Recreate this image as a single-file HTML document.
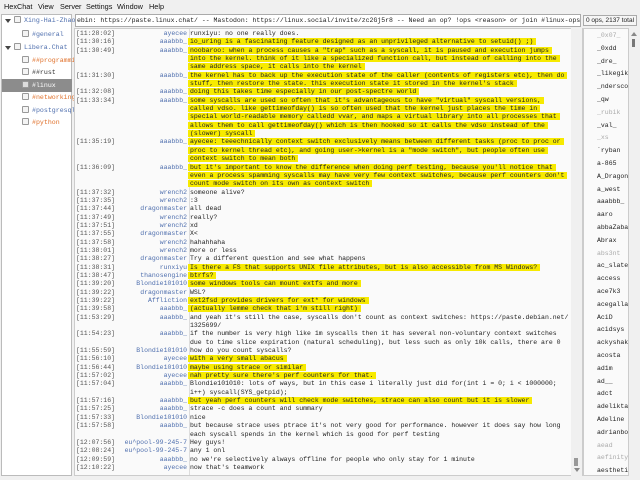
<!DOCTYPE html>
<html><head><meta charset="utf-8"><style>
*{margin:0;padding:0;box-sizing:border-box}
body{width:640px;height:480px;overflow:hidden;background:#f0f0f0;font-family:"Liberation Sans",sans-serif;position:relative}
.menu{position:absolute;top:0;left:0;width:640px;height:13px;font-size:7.3px;line-height:13px;color:#111}
.menu span{position:absolute;top:0;white-space:nowrap}
.tree{position:absolute;left:1px;top:14px;width:71px;height:462px;background:#fff;border:1px solid #bbb;font-family:"Liberation Mono",monospace;font-size:6.6px}
.ti{position:absolute;height:12px;line-height:12px;white-space:nowrap;overflow:hidden}
.ic{display:inline-block;width:7px;height:7px;border:1px solid #999;border-radius:1px;background:#f4f4f4;vertical-align:-1px;margin-right:3px}
.tri{position:absolute;width:0;height:0;border-left:3px solid transparent;border-right:3px solid transparent;border-top:4px solid #444}
.topic{position:absolute;left:75px;top:14px;width:506px;height:13px;background:#fff;border:1px solid #aaa;font-family:"Liberation Mono",monospace;font-size:6.5px;line-height:11px;padding-left:1px;white-space:nowrap;overflow:hidden;color:#222}
.cnt{position:absolute;left:583px;top:15px;width:54px;height:11px;border:1px solid #aaa;background:#f6f6f6;font-size:6.5px;line-height:9px;text-align:center;color:#222;white-space:nowrap}
.chat{position:absolute;left:74px;top:28px;width:509px;height:448px;background:#fafafa;border:1px solid #ccc;overflow:hidden}
.sep{position:absolute;left:114px;top:0;width:1px;height:448px;background:#ddd}
.lines{position:absolute;left:1px;top:1px;font-family:"Liberation Mono",monospace;font-size:6.5px;color:#222}
.l{height:8.35px;line-height:8.35px;white-space:nowrap;position:relative}
.t{position:absolute;left:0;color:#555}
.n{position:absolute;left:39px;width:72px;text-align:right;color:#4f6fae}
.m{position:absolute;left:114px}
.h{background:#f7ea00;padding:0 3px 0 2px;margin-left:-2px}
.sb{position:absolute;left:571px;top:28px;width:11px;height:448px;background:#f0f0f0}
.ul{position:absolute;left:583px;top:28px;width:46px;height:448px;background:#fafafa;border:1px solid #ccc;font-family:"Liberation Mono",monospace;font-size:6.5px;color:#222;overflow:hidden}
.u{position:absolute;left:13px;white-space:nowrap}
.g{color:#aaa}
.sb2{position:absolute;left:629px;top:28px;width:10px;height:448px;background:#f0f0f0}
</style></head><body>
<div class="menu">
<span style="left:4px">HexChat</span><span style="left:38px">View</span><span style="left:60px">Server</span><span style="left:86px">Settings</span><span style="left:117px">Window</span><span style="left:149px">Help</span>
</div>
<div class="tree">
<div class="tri" style="left:3px;top:4px"></div>
<div class="ti" style="left:12px;top:0px;color:#4f6fae"><span class="ic"></span>Xing-Hai-Zhao</div>
<div class="ti" style="left:20px;top:14px;color:#4f6fae"><span class="ic"></span>#general</div>
<div class="tri" style="left:3px;top:31px"></div>
<div class="ti" style="left:12px;top:27px;color:#4f6fae"><span class="ic"></span>Libera.Chat</div>
<div class="ti" style="left:20px;top:40px;color:#e0702a"><span class="ic"></span>##programming</div>
<div class="ti" style="left:20px;top:52px;color:#333"><span class="ic"></span>##rust</div>
<div style="position:absolute;left:0;top:64px;width:70px;height:13px;background:#8c8c8c"></div>
<div class="ti" style="left:20px;top:65px;color:#fff"><span class="ic" style="background:#ddd"></span>#linux</div>
<div class="ti" style="left:20px;top:77px;color:#e0702a"><span class="ic"></span>#networking</div>
<div class="ti" style="left:20px;top:90px;color:#4f6fae"><span class="ic"></span>#postgresql</div>
<div class="ti" style="left:20px;top:102px;color:#e0702a"><span class="ic"></span>#python</div>
</div>
<div class="topic">ebin: https://paste.linux.chat/ -- Mastodon: https://linux.social/invite/zc2Gj5r8 -- Need an op? !ops &lt;reason&gt; or join #linux-ops</div>
<div class="cnt">0 ops, 2137 total</div>
<div class="chat"><div class="sep"></div>
<div class="lines">
<div class="l"><span class="t">[11:28:02]</span><span class="n">ayecee</span><span class="m">runxiyu: no one really does.</span></div>
<div class="l"><span class="t">[11:30:16]</span><span class="n">aaabbb_</span><span class="m"><span class="h">io_uring is a fascinating feature designed as an unprivileged alternative to setuid() ;)</span></span></div>
<div class="l"><span class="t">[11:30:49]</span><span class="n">aaabbb_</span><span class="m"><span class="h">noobaroo: when a process causes a "trap" such as a syscall, it is paused and execution jumps</span></span></div>
<div class="l"><span class="m"><span class="h">into the kernel. think of it like a specialized function call, but instead of calling into the</span></span></div>
<div class="l"><span class="m"><span class="h">same address space, it calls into the kernel</span></span></div>
<div class="l"><span class="t">[11:31:30]</span><span class="n">aaabbb_</span><span class="m"><span class="h">the kernel has to back up the execution state of the caller (contents of registers etc), then do</span></span></div>
<div class="l"><span class="m"><span class="h">stuff, then restore the state. this execution state it stored in the kernel's stack</span></span></div>
<div class="l"><span class="t">[11:32:08]</span><span class="n">aaabbb_</span><span class="m"><span class="h">doing this takes time especially in our post-spectre world</span></span></div>
<div class="l"><span class="t">[11:33:34]</span><span class="n">aaabbb_</span><span class="m"><span class="h">some syscalls are used so often that it's advantageous to have "virtual" syscall versions,</span></span></div>
<div class="l"><span class="m"><span class="h">called vdso. like gettimeofday() is so often used that the kernel just places the time in</span></span></div>
<div class="l"><span class="m"><span class="h">special world-readable memory calledd vvar, and maps a virtual library into all processes that</span></span></div>
<div class="l"><span class="m"><span class="h">allows them to call gettimeofday() which is then hooked so it calls the vdso instead of the</span></span></div>
<div class="l"><span class="m"><span class="h">(slower) syscall</span></span></div>
<div class="l"><span class="t">[11:35:19]</span><span class="n">aaabbb_</span><span class="m"><span class="h">ayecee: teeechnically context switch exclusively means between different tasks (proc to proc or</span></span></div>
<div class="l"><span class="m"><span class="h">proc to kernel thread etc), and going user-&gt;kernel is a "mode switch", but people often use</span></span></div>
<div class="l"><span class="m"><span class="h">context switch to mean both</span></span></div>
<div class="l"><span class="t">[11:36:09]</span><span class="n">aaabbb_</span><span class="m"><span class="h">but it's important to know the difference when doing perf testing, because you'll notice that</span></span></div>
<div class="l"><span class="m"><span class="h">even a process spamming syscalls may have very few context switches, because perf counters don't</span></span></div>
<div class="l"><span class="m"><span class="h">count mode switch on its own as context switch</span></span></div>
<div class="l"><span class="t">[11:37:32]</span><span class="n">wrench2</span><span class="m">someone alive?</span></div>
<div class="l"><span class="t">[11:37:35]</span><span class="n">wrench2</span><span class="m">:3</span></div>
<div class="l"><span class="t">[11:37:44]</span><span class="n">dragonmaster</span><span class="m">all dead</span></div>
<div class="l"><span class="t">[11:37:49]</span><span class="n">wrench2</span><span class="m">really?</span></div>
<div class="l"><span class="t">[11:37:51]</span><span class="n">wrench2</span><span class="m">xd</span></div>
<div class="l"><span class="t">[11:37:55]</span><span class="n">dragonmaster</span><span class="m">X&lt;</span></div>
<div class="l"><span class="t">[11:37:58]</span><span class="n">wrench2</span><span class="m">hahahhaha</span></div>
<div class="l"><span class="t">[11:38:01]</span><span class="n">wrench2</span><span class="m">more or less</span></div>
<div class="l"><span class="t">[11:38:27]</span><span class="n">dragonmaster</span><span class="m">Try a different question and see what happens</span></div>
<div class="l"><span class="t">[11:38:31]</span><span class="n">runxiyu</span><span class="m"><span class="h">Is there a FS that supports UNIX file attributes, but is also accessible from MS Windows?</span></span></div>
<div class="l"><span class="t">[11:38:47]</span><span class="n">thanosengine</span><span class="m"><span class="h">btrfs?</span></span></div>
<div class="l"><span class="t">[11:39:20]</span><span class="n">Blondie101010</span><span class="m"><span class="h">some windows tools can mount extfs and more</span></span></div>
<div class="l"><span class="t">[11:39:22]</span><span class="n">dragonmaster</span><span class="m">WSL?</span></div>
<div class="l"><span class="t">[11:39:22]</span><span class="n">Affliction</span><span class="m"><span class="h">ext2fsd provides drivers for ext* for windows</span></span></div>
<div class="l"><span class="t">[11:39:58]</span><span class="n">aaabbb_</span><span class="m"><span class="h">(actually lemme check that i'm still right)</span></span></div>
<div class="l"><span class="t">[11:53:29]</span><span class="n">aaabbb_</span><span class="m">and yeah it's still the case, syscalls don't count as context switches: https://paste.debian.net/</span></div>
<div class="l"><span class="m">1325699/</span></div>
<div class="l"><span class="t">[11:54:23]</span><span class="n">aaabbb_</span><span class="m">if the number is very high like 1m syscalls then it has several non-voluntary context switches</span></div>
<div class="l"><span class="m">due to time slice expiration (natural scheduling), but less such as only 10k calls, there are 0</span></div>
<div class="l"><span class="t">[11:55:59]</span><span class="n">Blondie101010</span><span class="m">how do you count syscalls?</span></div>
<div class="l"><span class="t">[11:56:10]</span><span class="n">ayecee</span><span class="m"><span class="h">with a very small abacus</span></span></div>
<div class="l"><span class="t">[11:56:44]</span><span class="n">Blondie101010</span><span class="m"><span class="h">maybe using strace or similar</span></span></div>
<div class="l"><span class="t">[11:57:02]</span><span class="n">ayecee</span><span class="m"><span class="h">nah pretty sure there's perf counters for that.</span></span></div>
<div class="l"><span class="t">[11:57:04]</span><span class="n">aaabbb_</span><span class="m">Blondie101010: lots of ways, but in this case i literally just did for(int i = 0; i &lt; 1000000;</span></div>
<div class="l"><span class="m">i++) syscall(SYS_getpid);</span></div>
<div class="l"><span class="t">[11:57:16]</span><span class="n">aaabbb_</span><span class="m"><span class="h">but yeah perf counters will check mode switches, strace can also count but it is slower</span></span></div>
<div class="l"><span class="t">[11:57:25]</span><span class="n">aaabbb_</span><span class="m">strace -c does a count and summary</span></div>
<div class="l"><span class="t">[11:57:33]</span><span class="n">Blondie101010</span><span class="m">nice</span></div>
<div class="l"><span class="t">[11:57:58]</span><span class="n">aaabbb_</span><span class="m">but because strace uses ptrace it's not very good for performance. however it does say how long</span></div>
<div class="l"><span class="m">each syscall spends in the kernel which is good for perf testing</span></div>
<div class="l"><span class="t">[12:07:56]</span><span class="n">eu^pool-99-245-7</span><span class="m">Hey guys!</span></div>
<div class="l"><span class="t">[12:08:24]</span><span class="n">eu^pool-99-245-7</span><span class="m">any 1 onl</span></div>
<div class="l"><span class="t">[12:09:59]</span><span class="n">aaabbb_</span><span class="m">no we're selectively always offline for people who only stay for 1 minute</span></div>
<div class="l"><span class="t">[12:10:22]</span><span class="n">ayecee</span><span class="m">now that's teamwork</span></div>
</div></div>
<div class="sb"><div style="position:absolute;left:3px;top:430px;width:4px;height:8px;background:#999"></div><div style="position:absolute;left:3px;top:440px;border-left:3px solid transparent;border-right:3px solid transparent;border-top:4px solid #888;width:0;height:0"></div></div>
<div class="ul">
<div class="u g" style="top:3px">_0x07_</div><div class="u" style="top:16px">_0xdd</div><div class="u" style="top:29px">_dre_</div><div class="u" style="top:41px">_likegik</div><div class="u" style="top:54px">_ndersco</div><div class="u" style="top:67px">_qw</div><div class="u g" style="top:80px">_rubik</div><div class="u" style="top:93px">_val_</div><div class="u g" style="top:105px">_xs</div><div class="u" style="top:118px">`ryban</div><div class="u" style="top:131px">a-865</div><div class="u" style="top:144px">A_Dragon</div><div class="u" style="top:157px">a_west</div><div class="u" style="top:169px">aaabbb_</div><div class="u" style="top:182px">aaro</div><div class="u" style="top:195px">abbaZaba</div><div class="u" style="top:208px">Abrax</div><div class="u g" style="top:221px">abs3nt</div><div class="u" style="top:233px">ac_slate</div><div class="u" style="top:246px">access</div><div class="u" style="top:259px">ace7k3</div><div class="u" style="top:272px">acegalla</div><div class="u" style="top:285px">AciD</div><div class="u" style="top:297px">acidsys</div><div class="u" style="top:310px">ackyshak</div><div class="u" style="top:323px">acosta</div><div class="u" style="top:336px">ad1m</div><div class="u" style="top:349px">ad__</div><div class="u" style="top:361px">adct</div><div class="u" style="top:374px">adelikta</div><div class="u" style="top:387px">Adeline</div><div class="u" style="top:400px">adrianbo</div><div class="u g" style="top:413px">aead</div><div class="u g" style="top:425px">aefinity</div><div class="u" style="top:438px">aestheti</div>
</div>
<div class="sb2"><div style="position:absolute;left:2px;top:4px;border-left:3px solid transparent;border-right:3px solid transparent;border-bottom:4px solid #888;width:0;height:0"></div><div style="position:absolute;left:3px;top:11px;width:3px;height:8px;background:#777"></div></div>
</body></html>
